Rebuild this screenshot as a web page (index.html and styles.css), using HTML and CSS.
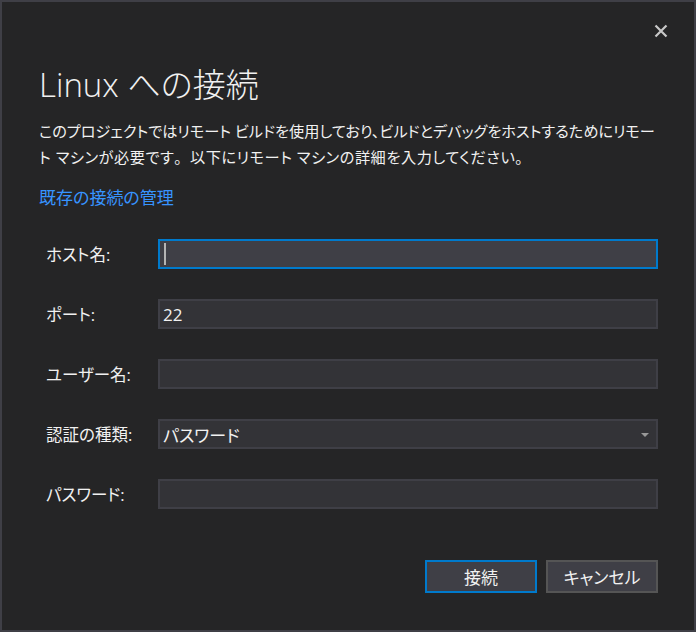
FILE: index.html
```html
<!DOCTYPE html>
<html lang="ja">
<head>
<meta charset="utf-8">
<title>Linux への接続</title>
<link rel="stylesheet" href="styles.css">
</head>
<body>
<div class="dialog">
  <div class="topbar">
    <button class="close" aria-label="閉じる">
      <svg width="14" height="14" viewBox="0 0 14 14"><path d="M1.5 1.5 L12.5 12.5 M12.5 1.5 L1.5 12.5" stroke="#c8c8c8" stroke-width="2.2" fill="none"/></svg>
    </button>
  </div>
  <h1 class="title">Linux への接続</h1>
  <p class="desc">このプロジェクトではリモート ビルドを使用しており、ビルドとデバッグをホストするためにリモー<br><span class="line2">ト マシンが必要です<span class="fw">。</span>以下にリモート マシンの詳細を入力してください<span class="fw">。</span></span></p>
  <a class="link" href="#">既存の接続の管理</a>
  <div class="form">
    <label class="label">ホスト名:</label>
    <div class="field focused"><span class="caret"></span></div>
    <label class="label">ポート:</label>
    <div class="field"><span class="value">22</span></div>
    <label class="label">ユーザー名:</label>
    <div class="field"></div>
    <label class="label">認証の種類:</label>
    <div class="field select"><span class="value">パスワード</span><span class="arrow"></span></div>
    <label class="label">パスワード:</label>
    <div class="field"></div>
  </div>
  <div class="buttons">
    <button class="btn primary">接続</button>
    <button class="btn">キャンセル</button>
  </div>
</div>
</body>
</html>
```
FILE: styles.css
```css
html, body {
  margin: 0;
  padding: 0;
  background: #252526;
}
.dialog {
  width: 696px;
  height: 632px;
  box-sizing: border-box;
  border: 2px solid #3f3f46;
  background: #252526;
  color: #f1f1f1;
  font-family: "Open Sans", "Noto Sans CJK JP", sans-serif;
  font-feature-settings: "palt";
  padding: 0 36px 0 37px;
  display: flex;
  flex-direction: column;
}
.topbar {
  display: flex;
  justify-content: flex-end;
  height: 58px;
  padding-top: 18px;
  box-sizing: border-box;
}
.close {
  width: 22px;
  height: 22px;
  margin-right: -14px;
  padding: 0;
  border: 0;
  background: transparent;
  display: flex;
  align-items: center;
  justify-content: center;
}
.title {
  margin: 0;
  font-weight: 300;
  font-size: 33px;
  line-height: 50px;
  color: #f1f1f1;
}
.desc {
  margin: 8px 0 0;
  font-size: 15.2px;
  line-height: 26px;
  color: #f1f1f1;
  white-space: nowrap;
}
.line2 {
  letter-spacing: 0.55px;
}
.fw {
  font-feature-settings: normal;
}
.link {
  margin-top: 16px;
  font-size: 17px;
  line-height: 24px;
  color: #3794ff;
  text-decoration: none;
  align-self: flex-start;
}
.form {
  margin-top: 29px;
  padding-left: 7px;
  display: grid;
  grid-template-columns: 112px 1fr;
  row-gap: 30px;
  align-items: center;
}
.label {
  font-size: 16.5px;
  color: #f1f1f1;
}
.field {
  height: 30px;
  box-sizing: border-box;
  border: 2px solid #3f3f46;
  background: #333337;
  display: flex;
  align-items: center;
  padding-left: 3px;
  position: relative;
}
.field.focused {
  border-color: #007acc;
  background: #3f3f46;
}
.caret {
  width: 2px;
  height: 22px;
  background: #b4b4b4;
  margin-left: 1px;
}
.value {
  font-size: 17px;
  color: #f1f1f1;
}
.arrow {
  position: absolute;
  right: 7px;
  top: 12px;
  width: 0;
  height: 0;
  border-left: 4px solid transparent;
  border-right: 4px solid transparent;
  border-top: 4px solid #999999;
}
.buttons {
  margin-top: 51px;
  display: flex;
  justify-content: flex-end;
  gap: 9px;
}
.btn {
  width: 112px;
  height: 33px;
  box-sizing: border-box;
  border: 2px solid #555555;
  background: #3f3f46;
  color: #f1f1f1;
  font-family: "Open Sans", "Noto Sans CJK JP", sans-serif;
  font-feature-settings: "palt";
  font-size: 17px;
  padding: 0;
}
.btn.primary {
  border-color: #007acc;
}
```
